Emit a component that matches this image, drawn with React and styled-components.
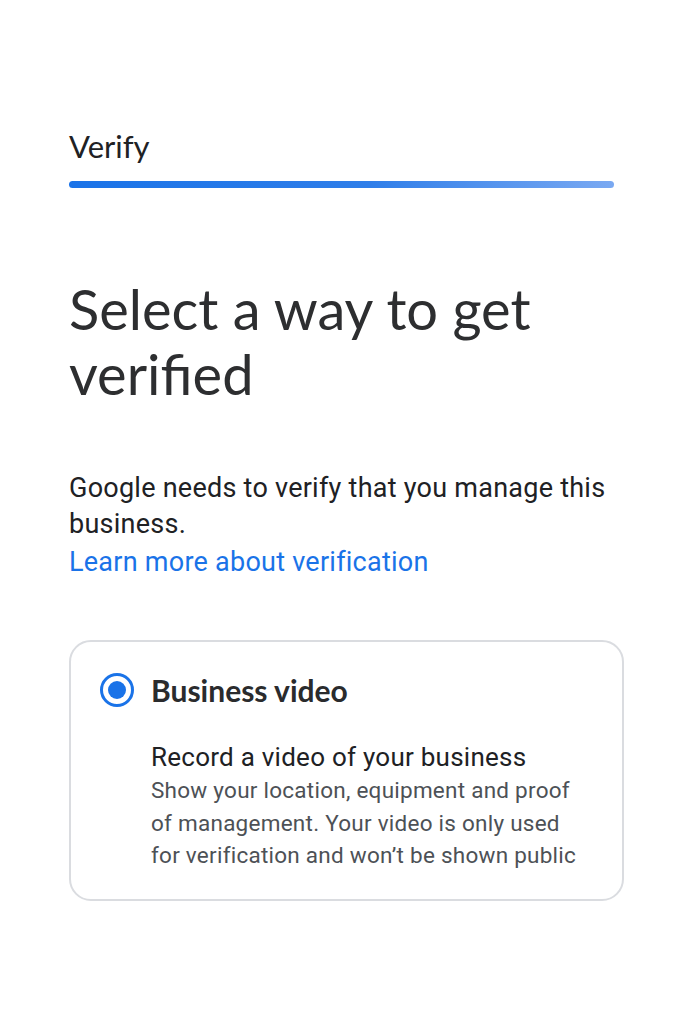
import styled, { createGlobalStyle } from "styled-components"

const Global = createGlobalStyle`
  html, body {
    margin: 0;
    padding: 0;
    background: #ffffff;
  }
`

const Page = styled.div`
  width: 683px;
  min-height: 1024px;
  background: #fff;
  padding: 126px 0 0 69px;
  box-sizing: border-box;
  display: flex;
  flex-direction: column;
`

const StepTitle = styled.div`
  font-family: "Lato", "Open Sans", sans-serif;
  font-size: 31px;
  color: #202124;
  line-height: 40px;
`

const Progress = styled.div`
  margin-top: 15px;
  width: 545px;
  height: 7px;
  border-radius: 4px;
  background: linear-gradient(90deg, #1a73e8 0%, #2f7ee9 55%, #7aa9f2 100%);
`

const Heading = styled.h1`
  margin: 88px 0 0 0;
  font-family: "Lato", "Open Sans", sans-serif;
  font-weight: 400;
  font-size: 56px;
  line-height: 65px;
  color: #2d2e30;
  width: 540px;
`

const Body = styled.p`
  margin: 64px 0 0 0;
  font-family: Roboto, "Noto Sans", sans-serif;
  font-size: 27px;
  letter-spacing: 0.25px;
  line-height: 36px;
  color: #202124;
  width: 560px;
`

const Link = styled.a`
  display: block;
  margin-top: 2px;
  color: #1a73e8;
  text-decoration: none;
`

const Card = styled.div`
  margin-top: 60px;
  width: 555px;
  box-sizing: border-box;
  border: 2px solid #dadce0;
  border-radius: 22px;
  padding: 28px 30px 27px 29px;
  display: grid;
  grid-template-columns: 34px 1fr;
  column-gap: 17px;
`

const Radio = styled.span`
  width: 34px;
  height: 34px;
  box-sizing: border-box;
  border-radius: 50%;
  border: 3px solid #1a73e8;
  display: flex;
  align-items: center;
  justify-content: center;
  align-self: center;

  &::after {
    content: "";
    width: 18px;
    height: 18px;
    border-radius: 50%;
    background: #1a73e8;
  }
`

const OptionTitle = styled.div`
  font-family: "Lato", "Open Sans", sans-serif;
  font-weight: 700;
  font-size: 30px;
  line-height: 40px;
  color: #2a2b2d;
`

const OptionText = styled.div`
  grid-column: 2;
  margin-top: 30px;
  font-family: Roboto, "Noto Sans", sans-serif;
  letter-spacing: 0.25px;
`

const OptionLead = styled.div`
  font-size: 26px;
  line-height: 34px;
  color: #202124;
`

const OptionDesc = styled.div`
  font-size: 22.5px;
  line-height: 32.5px;
  color: #4d5156;
`

export default function App() {
  return (
    <>
      <Global />
      <Page>
        <StepTitle>Verify</StepTitle>
        <Progress />
        <Heading>Select a way to get verified</Heading>
        <Body>
          Google needs to verify that you manage this business.
          <Link href="#">Learn more about verification</Link>
        </Body>
        <Card>
          <Radio />
          <OptionTitle>Business video</OptionTitle>
          <OptionText>
            <OptionLead>Record a video of your business</OptionLead>
            <OptionDesc>
              Show your location, equipment and proof of management. Your video is only used for verification and won’t be shown public
            </OptionDesc>
          </OptionText>
        </Card>
      </Page>
    </>
  )
}
